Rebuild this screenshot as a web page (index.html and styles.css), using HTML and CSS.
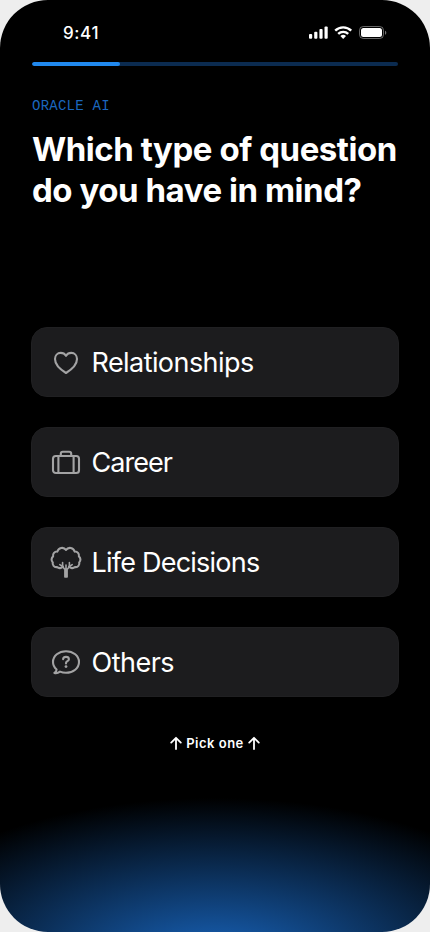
FILE: index.html
```html
<!DOCTYPE html>
<html lang="en">
<head>
<meta charset="utf-8">
<meta name="viewport" content="width=device-width, initial-scale=1">
<title>Oracle AI</title>
<link rel="stylesheet" href="styles.css">
</head>
<body>
<main class="phone">
  <header class="status">
    <span class="time">9:41</span>
    <svg class="status-icons" width="80" height="16" viewBox="0 0 80 16" fill="#fff">
      <rect x="1" y="9" width="3.2" height="4.8" rx="1"/>
      <rect x="6.2" y="6.7" width="3.2" height="7.1" rx="1"/>
      <rect x="11.4" y="4" width="3.2" height="9.8" rx="1"/>
      <rect x="16.5" y="1.4" width="3.2" height="12.4" rx="1"/>
      <g fill="none" stroke="#fff" stroke-width="2.4">
        <path d="M27.2 5.6a11.6 11.6 0 0 1 16 0"/>
        <path d="M30.2 8.9a7.2 7.2 0 0 1 10 0"/>
      </g>
      <path d="M32.4 11a4.2 4.2 0 0 1 5.600 0l-2.800 2.900z"/>
      <rect x="51.500" y="1.500" width="24" height="12" rx="3.800" fill="none" stroke="#fff" stroke-opacity=".4"/>
      <rect x="53" y="3" width="21" height="9" rx="2.500"/>
      <path d="M77 5.700v4c.8-.3 1.300-1.100 1.300-2s-.5-1.700-1.300-2z" fill-opacity=".45"/>
    </svg>
  </header>
  <div class="progress"><div class="progress-fill"></div></div>
  <p class="eyebrow">ORACLE AI</p>
  <h1 class="title">Which type of question<br>do you have in mind?</h1>
  <div class="options">
    <button class="option">
      <svg class="icon" viewBox="0 0 32 32"><path d="M16 27C11.500 24.200 5 19 5 13c0-3.600 2.500-6.100 5.700-6.100 2.300 0 4.200 1.100 5.300 2.900 1.100-1.800 3-2.900 5.300-2.900C24.500 6.900 27 9.400 27 13c0 6-6.500 11.200-11 14z"/></svg>
      <span class="label relationships">Relationships</span>
    </button>
    <button class="option">
      <svg class="icon" viewBox="0 0 32 32"><rect x="3" y="10" width="26" height="17" rx="2.8"/><path d="M8.400 10v17M23.600 10v17M10.800 10V7.800a2 2 0 0 1 2-2h6.400a2 2 0 0 1 2 2V10"/></svg>
      <span class="label career">Career</span>
    </button>
    <button class="option">
      <svg class="icon" viewBox="0 0 32 32"><path d="M13 20.500A4 4 0 0 1 7 21a3.600 3.600 0 0 1-4.200-4.600 4 4 0 0 1 .3-6A3.900 3.900 0 0 1 7.400 5.600 4.800 4.800 0 0 1 16 4a4.800 4.800 0 0 1 8.600 1.600 3.900 3.900 0 0 1 4.300 4.800 4 4 0 0 1 .3 6A3.600 3.600 0 0 1 25 21a4 4 0 0 1-6-.5"/><path class="trunk" d="M14.900 31v-7.500L12.500 20.500 9.800 18.600M17.100 31v-7.500l2.400-3 2.700-1.900M16 31V19M12.600 16.500v4M19.400 16.500v4"/></svg>
      <span class="label life">Life Decisions</span>
    </button>
    <button class="option">
      <svg class="icon" viewBox="0 0 32 32"><path d="M6.600 23.500C4.300 21.500 3 18.900 3 16 3 9.900 8.800 5.200 16 5.200S29 9.900 29 16s-5.800 10.800-13 10.800c-2.200 0-4.200-.4-6-1.200-1.500 1.100-3.900 1.700-5.600 1.300 1.200-.8 2.100-1.900 2.200-3.400z"/><path class="question" d="M13.100 13.100c.2-1.500 1.300-2.200 2.900-2.200 1.700 0 2.900.8 2.900 2.300 0 2-2.900 2-2.900 3.900v.3"/><circle class="dot" cx="16" cy="20.600" r="1.400"/></svg>
      <span class="label others">Others</span>
    </button>
  </div>
  <p class="hint">
    <svg class="arrow" viewBox="0 0 12 14"><path d="M6 13V2M1.200 6.600 6 1.800l4.800 4.800"/></svg>
    <span>Pick one</span>
    <svg class="arrow" viewBox="0 0 12 14"><path d="M6 13V2M1.200 6.600 6 1.800l4.800 4.800"/></svg>
  </p>
</main>
</body>
</html>
```
FILE: styles.css
```css
* { box-sizing: border-box; }
body { margin: 0; background: #eee; font-family: Inter, sans-serif; color: #fff; }
.phone {
  width: 430px; height: 932px; padding: 0 31px; overflow: hidden; border-radius: 48px;
  background: radial-gradient(ellipse 350px 162px at 215px 960px, #1864bc 0%, #000 100%) #000;
}
.status { display: flex; justify-content: space-between; align-items: center; height: 62px; padding: 3px 11px 0 32px; }
.time { font-size: 17px; font-weight: 550; line-height: 22px; letter-spacing: .6px; }
.status-icons { display: block; }
.progress { height: 4px; margin: 0 1px; border-radius: 2px; background: #0b2b50; overflow: hidden; }
.progress-fill { width: 88px; height: 4px; border-radius: 2px; background: #2189ee; }
.eyebrow { margin: 30px 1px 0; height: 20px; font: 14px/20px "Liberation Mono", monospace; letter-spacing: .25px; color: #1b66bd; }
.title { margin: 13px 1px 0; font-size: 33px; line-height: 41px; font-weight: 700; letter-spacing: -.46px; white-space: nowrap; }
.options { display: grid; gap: 30px; margin-top: 116px; }
.option {
  display: flex; align-items: center; gap: 9.5px; height: 70px; padding: 0 18px; border: 1px solid #202022;
  border-radius: 16px; background: #1c1c1e; color: #fff; font: 400 27px/34px Inter, sans-serif;
}
.label { padding-top: 1px; }
.relationships { letter-spacing: -.57px; }
.career { letter-spacing: -.95px; }
.life { letter-spacing: -.77px; }
.others { letter-spacing: -.5px; }
.icon { width: 32px; height: 32px; fill: none; stroke: #a3a3a4; stroke-width: 2.1; stroke-linejoin: round; stroke-linecap: round; }
.trunk { stroke-width: 1.6; }
.question { stroke-width: 2.1; }
.dot { fill: #a3a3a4; stroke: none; }
.hint { display: flex; justify-content: center; align-items: center; gap: 4px; margin: 37px 0 0; height: 18px; font-size: 13px; line-height: 18px; font-weight: 600; letter-spacing: .5px; }
.arrow { width: 12px; height: 14px; fill: none; stroke: #fff; stroke-width: 1.8; stroke-linecap: round; stroke-linejoin: round; }
```
